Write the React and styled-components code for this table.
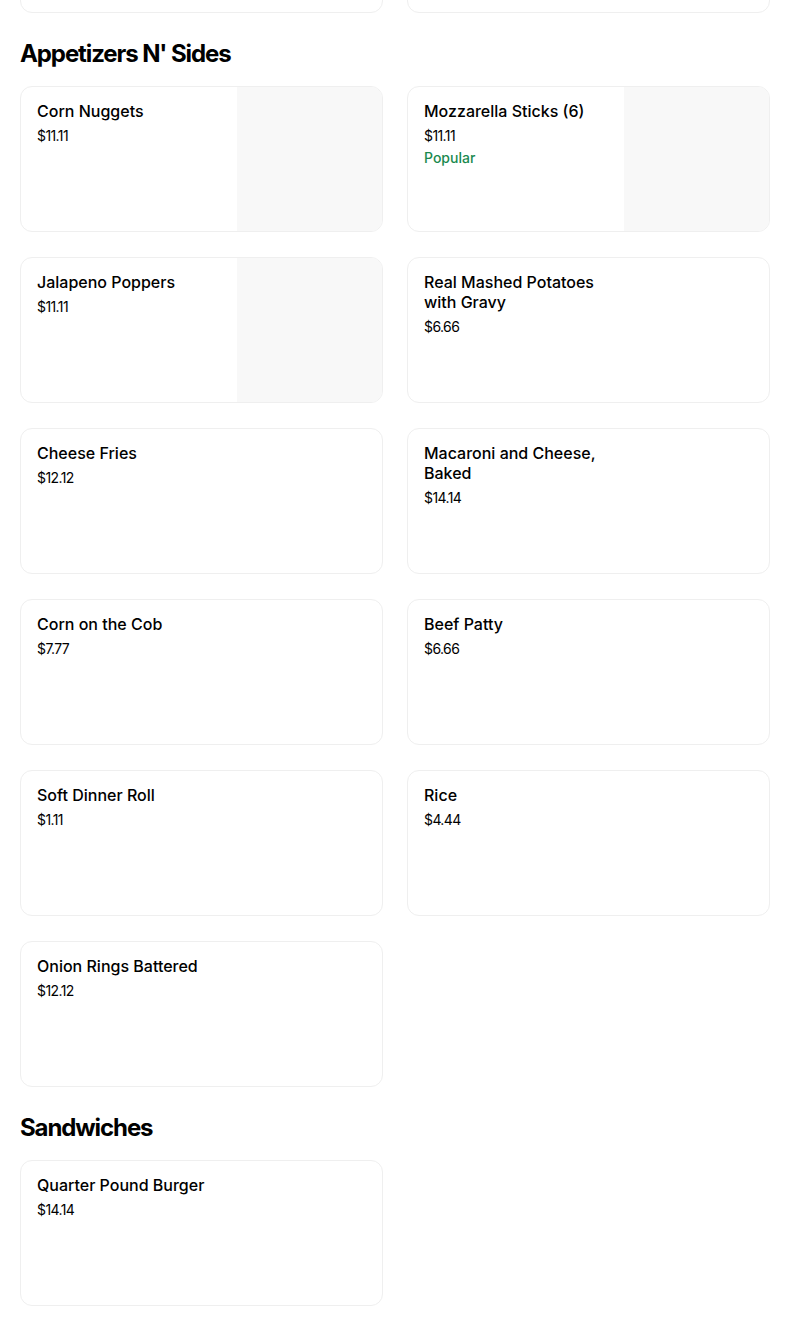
import React from 'react';
import styled, { createGlobalStyle } from 'styled-components';

const GlobalStyle = createGlobalStyle`
    html, body {
        margin: 0;
        padding: 0;
        background: #ffffff;
        overflow: hidden;
    }
    body {
        font-family: Inter, "Noto Sans", Arial, sans-serif;
        color: #000000;
    }
`;

const Page = styled.main`
    width: 750px;
    padding-left: 20px;
    margin-top: -133px;
`;

const Section = styled.section`
    display: flex;
    flex-direction: column;
`;

const SectionTitle = styled.h2`
    margin: 0;
    padding: 25px 0 17px;
    line-height: 31px;
    font-size: 24px;
    font-weight: 700;
    letter-spacing: -1.1px;
`;

const Grid = styled.div`
    display: grid;
    grid-template-columns: 363px 363px;
    column-gap: 24px;
    row-gap: 25px;
`;

const Card = styled.div`
    height: 146px;
    box-sizing: border-box;
    border: 1px solid #efefef;
    border-radius: 12px;
    overflow: hidden;
    display: flex;
    background: #ffffff;
`;

const Info = styled.div`
    flex: 1;
    padding: 14px 16px;
    min-width: 0;
`;

const Name = styled.div`
    max-width: 190px;
    font-size: 16px;
    line-height: 20px;
    font-weight: 500;
    color: #000;
`;

const Price = styled.div`
    margin-top: 5px;
    font-size: 14px;
    line-height: 20px;
    letter-spacing: -0.6px;
    color: #000;
`;

const Tag = styled.div`
    margin-top: 2px;
    font-size: 14px;
    line-height: 20px;
    font-weight: 500;
    color: #1a8a4f;
`;

const Photo = styled.div`
    width: 145px;
    flex-shrink: 0;
    background: #f8f8f8;
`;

const previous = [
    { name: '', price: '' },
    { name: '', price: '' },
];

const appetizers = [
    { name: 'Corn Nuggets', price: '$11.11', photo: true },
    { name: 'Mozzarella Sticks (6)', price: '$11.11', photo: true, tag: 'Popular' },
    { name: 'Jalapeno Poppers', price: '$11.11', photo: true },
    { name: 'Real Mashed Potatoes with Gravy', price: '$6.66' },
    { name: 'Cheese Fries', price: '$12.12' },
    { name: 'Macaroni and Cheese, Baked', price: '$14.14' },
    { name: 'Corn on the Cob', price: '$7.77' },
    { name: 'Beef Patty', price: '$6.66' },
    { name: 'Soft Dinner Roll', price: '$1.11' },
    { name: 'Rice', price: '$4.44' },
    { name: 'Onion Rings Battered', price: '$12.12' },
];

const sandwiches = [
    { name: 'Quarter Pound Burger', price: '$14.14' },
];

const MenuItem = ({ item }) => (
    <Card>
        <Info>
            { item.name && <Name>{ item.name }</Name> }
            { item.price && <Price>{ item.price }</Price> }
            { item.tag && <Tag>{ item.tag }</Tag> }
        </Info>
        { item.photo && <Photo /> }
    </Card>
);

export default function App() {
    return (
        <>
            <GlobalStyle />
            <Page>
                <Grid>
                    { previous.map((item, i) => <MenuItem key={ i } item={ item } />) }
                </Grid>
                <Section>
                    <SectionTitle>Appetizers N' Sides</SectionTitle>
                    <Grid>
                        { appetizers.map(item => <MenuItem key={ item.name } item={ item } />) }
                    </Grid>
                </Section>
                <Section>
                    <SectionTitle>Sandwiches</SectionTitle>
                    <Grid>
                        { sandwiches.map(item => <MenuItem key={ item.name } item={ item } />) }
                    </Grid>
                </Section>
            </Page>
        </>
    );
}
